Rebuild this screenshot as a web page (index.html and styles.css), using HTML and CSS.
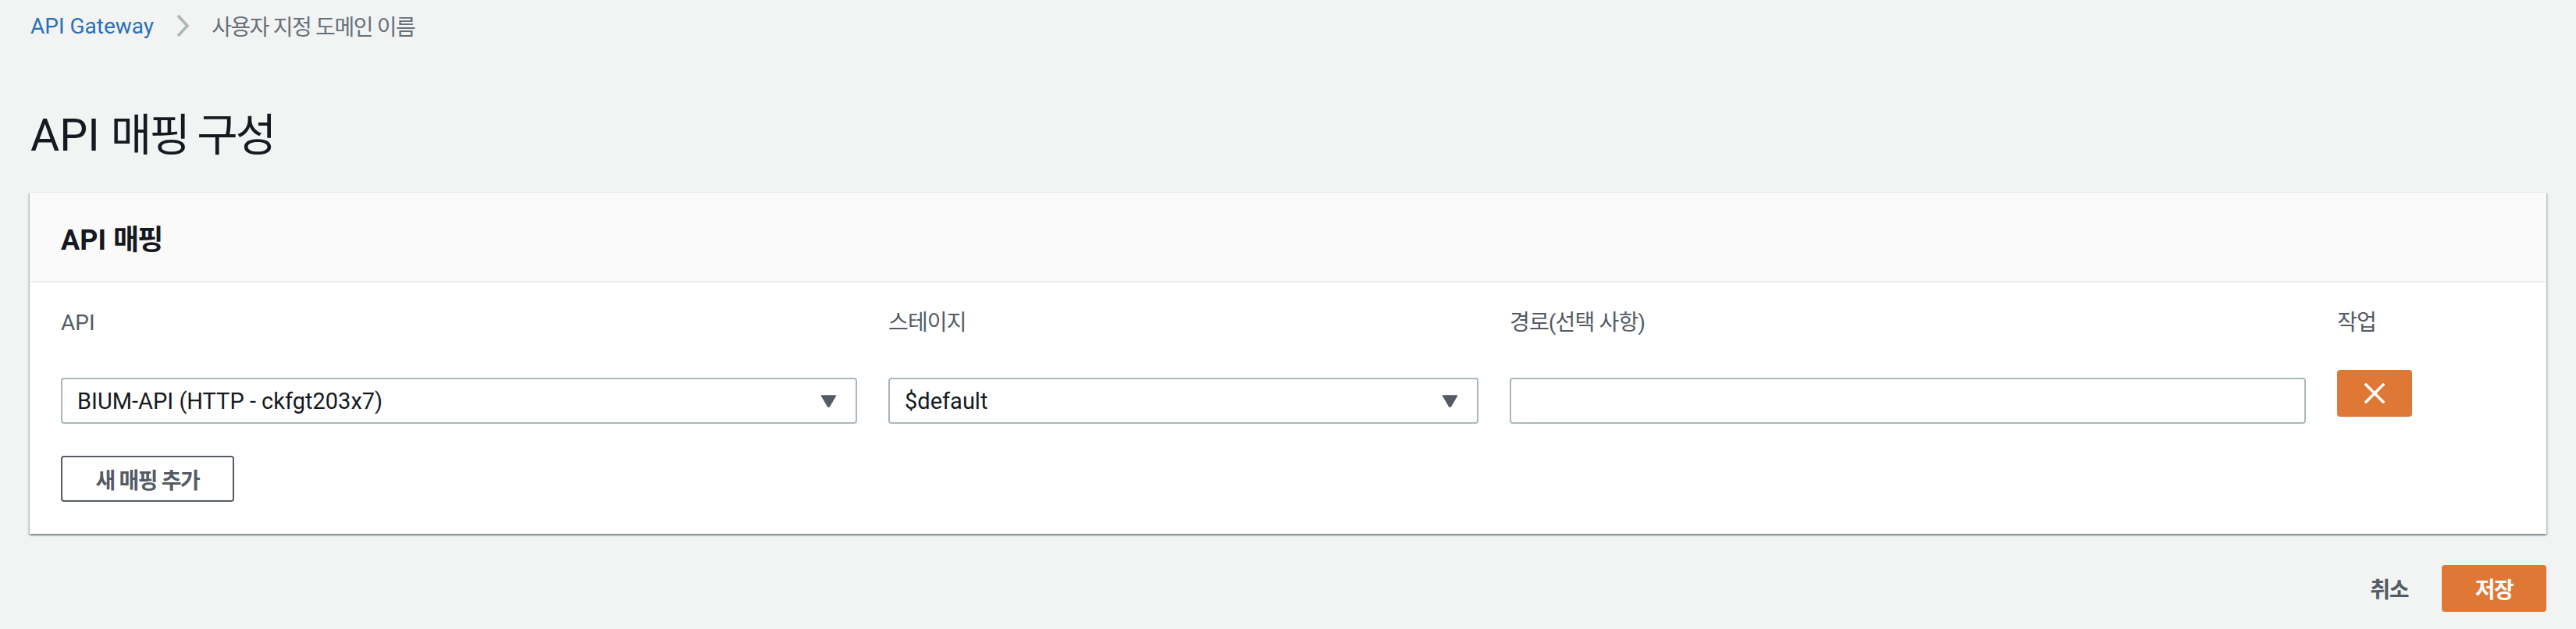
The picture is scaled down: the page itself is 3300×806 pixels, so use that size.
FILE: index.html
```html
<!DOCTYPE html>
<html lang="ko">
<head>
<meta charset="utf-8">
<title>API 매핑 구성</title>
<link rel="stylesheet" href="styles.css">
</head>
<body>
<div class="page">
  <nav class="breadcrumbs">
    <a class="crumb-link" href="#">API Gateway</a>
    <svg class="crumb-sep" width="18" height="30" viewBox="0 0 18 30"><path d="M3 2 L15 15 L3 28" fill="none" stroke="#aab7b8" stroke-width="3.5"/></svg>
    <span class="crumb-current">사용자 지정 도메인 이름</span>
  </nav>

  <h1 class="page-title">API <span class="ko">매핑 구성</span></h1>

  <section class="panel">
    <header class="panel-header">
      <h2 class="panel-title">API <span class="ko">매핑</span></h2>
    </header>
    <div class="panel-body">
      <div class="mapping-grid">
        <div class="field-label">API</div>
        <div class="field-label ko">스테이지</div>
        <div class="field-label ko">경로(선택 사항)</div>
        <div class="field-label ko">작업</div>

        <div class="select-box">
          <span class="select-value">BIUM-API (HTTP - ckfgt203x7)</span>
          <svg class="caret" width="21" height="16" viewBox="0 0 21 16"><path d="M1.5 1 H19.5 L11.5 14.5 Q10.5 16 9.5 14.5 Z" fill="#545b64" stroke="#545b64" stroke-width="1.5" stroke-linejoin="round"/></svg>
        </div>
        <div class="select-box">
          <span class="select-value">$default</span>
          <svg class="caret" width="21" height="16" viewBox="0 0 21 16"><path d="M1.5 1 H19.5 L11.5 14.5 Q10.5 16 9.5 14.5 Z" fill="#545b64" stroke="#545b64" stroke-width="1.5" stroke-linejoin="round"/></svg>
        </div>
        <input class="text-input" type="text" value="">
        <div class="action-cell">
          <button class="remove-btn" type="button" aria-label="삭제">
            <svg width="26" height="26" viewBox="0 0 26 26"><path d="M2 2 L24 24 M24 2 L2 24" stroke="#fff" stroke-width="3.5" stroke-linecap="square"/></svg>
          </button>
        </div>
      </div>
      <button class="add-btn ko" type="button">새 매핑 추가</button>
    </div>
  </section>

  <div class="form-actions">
    <button class="cancel-btn ko" type="button">취소</button>
    <button class="save-btn ko" type="button">저장</button>
  </div>
</div>
</body>
</html>
```

FILE: styles.css
```css
* { box-sizing: border-box; }

body {
  margin: 0;
  background: #f2f3f3;
  font-family: Roboto, "Noto Sans CJK KR", "Noto Sans", sans-serif;
  color: #16191f;
  font-size: 29px;
}

.ko {
  letter-spacing: -0.05em;
}

.page {
  padding: 0 38px;
}

.breadcrumbs {
  height: 66px;
  display: flex;
  align-items: center;
  padding-left: 1px;
}

.crumb-link {
  color: #2a71b8;
  text-decoration: none;
  font-size: 28px;
}

.crumb-sep {
  margin: 0 28px 0 28px;
}

.crumb-current {
  color: #687078;
  font-size: 28px;
  letter-spacing: -0.05em;
}

.page-title {
  margin: 73px 0 0 0;
  height: 70px;
  line-height: 70px;
  font-size: 57px;
  font-weight: 400;
  padding-left: 1px;
}

.panel {
  margin-top: 37px;
  background: #fff;
  box-shadow: 0 2px 2px 0 rgba(0, 28, 36, 0.3), 2px 2px 2px 0 rgba(0, 28, 36, 0.15), -2px 2px 2px 0 rgba(0, 28, 36, 0.15);
  border-top: 1px solid #eaeded;
}

.panel-header {
  height: 115px;
  background: #fafafa;
  border-bottom: 2px solid #eaeded;
  display: flex;
  align-items: center;
  padding: 0 40px;
}

.panel-title {
  margin: 0;
  font-size: 36px;
  font-weight: 700;
}

.panel-body {
  padding: 32px 40px 41px 40px;
}

.mapping-grid {
  display: grid;
  grid-template-columns: 1020px 756px 1020px 1fr;
  column-gap: 40px;
  row-gap: 50px;
  align-items: start;
}

.field-label {
  height: 40px;
  line-height: 40px;
  color: #545b64;
  font-size: 28px;
}

.field-label.ko {
  letter-spacing: -0.03em;
}

.select-box {
  height: 59px;
  border: 2px solid #aab7b8;
  border-radius: 4px;
  display: flex;
  align-items: center;
  justify-content: space-between;
  padding: 0 24px 0 19px;
  background: #fff;
}

.select-value {
  font-size: 29px;
  color: #16191f;
}

.text-input {
  height: 59px;
  width: 100%;
  border: 2px solid #aab7b8;
  border-radius: 4px;
  font: inherit;
  padding: 0 19px;
  background: #fff;
}

.action-cell {
  margin-top: -10px;
}

.remove-btn {
  width: 96px;
  height: 60px;
  background: #de7834;
  border: none;
  border-radius: 4px;
  display: flex;
  align-items: center;
  justify-content: center;
  padding: 0;
}

.add-btn {
  margin-top: 41px;
  height: 59px;
  width: 222px;
  padding: 0;
  background: #fff;
  border: 2px solid #545b64;
  border-radius: 4px;
  font-family: Roboto, "Noto Sans CJK KR", sans-serif;
  font-size: 28px;
  font-weight: 700;
  color: #545b64;
  display: block;
}

.form-actions {
  margin-top: 40px;
  display: flex;
  justify-content: flex-end;
  align-items: center;
}

.cancel-btn {
  background: none;
  border: none;
  font-family: Roboto, "Noto Sans CJK KR", sans-serif;
  font-size: 28px;
  font-weight: 700;
  color: #545b64;
  padding: 0;
  margin-right: 43px;
}

.save-btn {
  width: 134px;
  height: 60px;
  background: #de7834;
  border: none;
  border-radius: 4px;
  font-family: Roboto, "Noto Sans CJK KR", sans-serif;
  font-size: 28px;
  font-weight: 700;
  color: #fff;
}
```
